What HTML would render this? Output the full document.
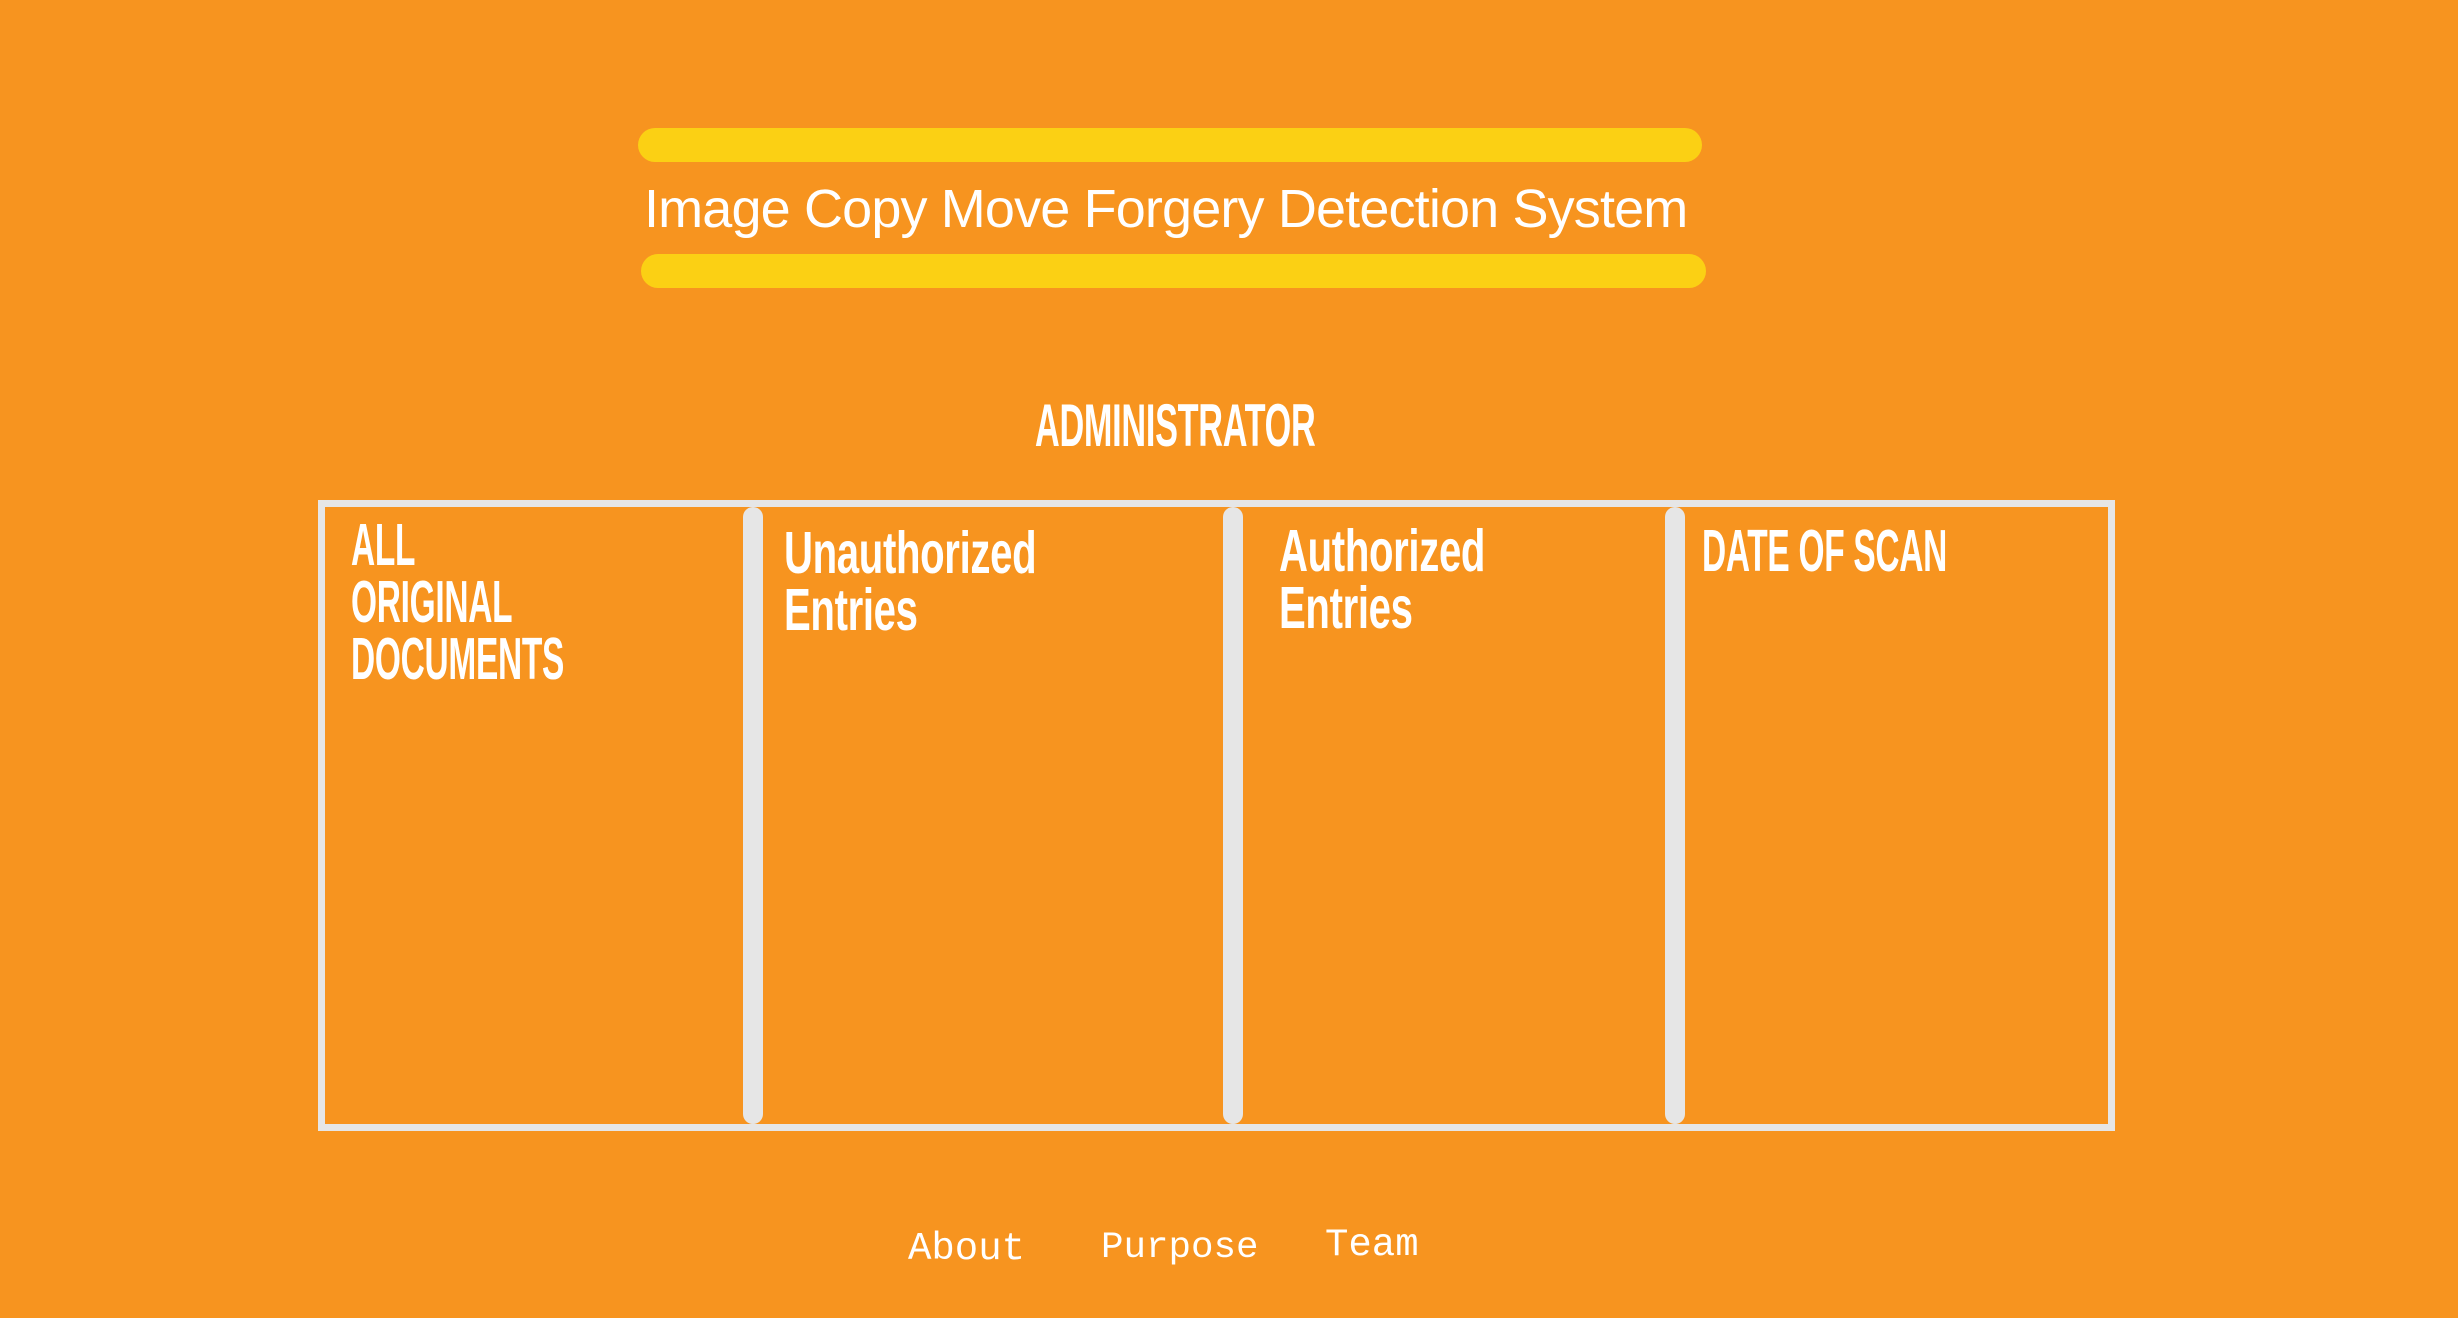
<!DOCTYPE html>
<html><head><meta charset="utf-8"><style>
html,body{margin:0;padding:0}
body{width:2458px;height:1318px;background:#f7941f;position:relative;overflow:hidden;font-family:"Liberation Sans",sans-serif}
.bar{position:absolute;height:34px;border-radius:17px;background:#fbd014}
.title{position:absolute;left:644px;top:178px;font-size:54px;color:#fff;white-space:nowrap;letter-spacing:-0.85px;font-weight:normal}
.cond{position:absolute;color:#fff;font-weight:bold;font-size:59px;line-height:57px;transform:scaleX(0.567);transform-origin:0 0;white-space:nowrap;letter-spacing:-0.5px}
.lc{transform:scaleX(0.68)}
.box{position:absolute;left:318px;top:500px;width:1797px;height:631px;border:7px solid #e6e6e6;box-sizing:border-box}
.div{position:absolute;width:20px;top:507px;height:617px;background:#e6e6e6;border-radius:10px}
.foot{position:absolute;color:#fff;font-family:"Liberation Mono",monospace;font-size:39px;white-space:nowrap}
</style></head><body>
<div class="bar" style="left:638px;top:128px;width:1064px"></div>
<div class="title">Image Copy Move Forgery Detection System</div>
<div class="bar" style="left:641px;top:254px;width:1065px"></div>
<div class="cond" style="left:1035px;top:397px;font-size:60px;transform:scaleX(0.571)">ADMINISTRATOR</div>
<div class="box"></div>
<div class="div" style="left:743px"></div>
<div class="div" style="left:1223px"></div>
<div class="div" style="left:1665px"></div>
<div class="cond" style="left:351px;top:517px">ALL<br>ORIGINAL<br>DOCUMENTS</div>
<div class="cond lc" style="left:784px;top:525px">Unauthorized<br>Entries</div>
<div class="cond lc" style="left:1279px;top:523px">Authorized<br>Entries</div>
<div class="cond" style="left:1702px;top:523px">DATE OF SCAN</div>
<div class="foot" style="left:908px;top:1227px">About</div>
<div class="foot" style="left:1101px;top:1227px;font-size:37.5px">Purpose</div>
<div class="foot" style="left:1325px;top:1223px">Team</div>
</body></html>
